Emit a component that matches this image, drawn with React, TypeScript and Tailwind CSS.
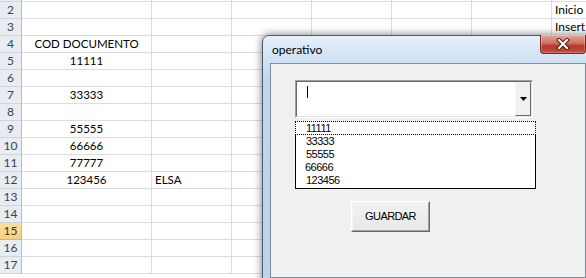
import React from "react";

// ─── Sheet data ──────────────────────────────────────────────────────────────

type Cells = { a?: string; b?: string; g?: string };

const ROWS: { n: number; cells: Cells }[] = [
  { n: 1, cells: {} },
  { n: 2, cells: { g: "Inicio" } },
  { n: 3, cells: { g: "Insert" } },
  { n: 4, cells: { a: "COD DOCUMENTO" } },
  { n: 5, cells: { a: "11111" } },
  { n: 6, cells: {} },
  { n: 7, cells: { a: "33333" } },
  { n: 8, cells: {} },
  { n: 9, cells: { a: "55555" } },
  { n: 10, cells: { a: "66666" } },
  { n: 11, cells: { a: "77777" } },
  { n: 12, cells: { a: "123456", b: "ELSA" } },
  { n: 13, cells: {} },
  { n: 14, cells: {} },
  { n: 15, cells: {} },
  { n: 16, cells: {} },
  { n: 17, cells: {} },
];

const ACTIVE_ROW = 15;

const LIST_ITEMS = ["11111", "33333", "55555", "66666", "123456"];

function SheetRow({ n, cells }: { n: number; cells: Cells }) {
  const active = n === ACTIVE_ROW;
  return (
    <div className="flex h-[17px] shrink-0">
      <div
        className={
          active
            ? "flex w-[22px] shrink-0 items-center justify-center border-r border-b border-r-[#b5bdc7] border-b-[#e9b35a] bg-[linear-gradient(180deg,#fbe0a3_0%,#f7cf7c_100%)] text-[12px] leading-[16px] text-[#3a3428]"
            : "flex w-[22px] shrink-0 items-center justify-center border-r border-b border-r-[#b5bdc7] border-b-[#cfd5dc] bg-[#e9ecf0] text-[12px] leading-[16px] text-[#34465c]"
        }
      >
        {/* row 1 is scrolled almost out of view, its number is not visible */}
        {n > 1 ? n : null}
      </div>
      <div className="w-[130px] shrink-0 border-r border-b border-[#dadcdf] text-center text-[11.5px] leading-[16px] text-black">
        {cells.a}
      </div>
      <div className="w-[80px] shrink-0 border-r border-b border-[#dadcdf] pl-[3px] text-[11.5px] leading-[16px] text-black">
        {cells.b}
      </div>
      <div className="w-[80px] shrink-0 border-r border-b border-[#dadcdf]" />
      <div className="w-[80px] shrink-0 border-r border-b border-[#dadcdf]" />
      <div className="w-[80px] shrink-0 border-r border-b border-[#dadcdf]" />
      <div className="w-[80px] shrink-0 border-r border-b border-[#dadcdf]" />
      <div className="w-[80px] shrink-0 whitespace-nowrap border-r border-b border-[#dadcdf] pl-[3px] text-[12px] leading-[16px] text-black">
        {cells.g}
      </div>
    </div>
  );
}

// ─── Window chrome ───────────────────────────────────────────────────────────

function CloseButton() {
  return (
    <div className="-mt-[1px] flex h-[19px] w-[46px] items-center justify-center rounded-b-[4px] border border-t-0 border-[#6e2a22] bg-[linear-gradient(180deg,#e4a899_0%,#d0705f_45%,#b8392a_60%,#c44c3a_100%)] shadow-[inset_0_0_0_1px_rgba(255,255,255,0.25)]">
      <svg width="14" height="12" viewBox="0 0 14 12">
        <path d="M3 2 L11 10 M11 2 L3 10" stroke="#4a1a14" strokeWidth="4" strokeLinecap="square" />
        <path d="M3 2 L11 10 M11 2 L3 10" stroke="#ffffff" strokeWidth="2" strokeLinecap="square" />
      </svg>
    </div>
  );
}

function ComboBox() {
  return (
    <div className="ml-[24px] mt-[16px] h-[38px] w-[238px] border border-t-[#a0a0a0] border-l-[#a0a0a0] border-b-white border-r-white">
      <div className="flex h-full w-full border border-t-[#696969] border-l-[#696969] border-b-[#e3e3e3] border-r-[#e3e3e3] bg-white">
        <div className="flex-1">
          <div className="ml-[10px] mt-[4px] h-[12px] w-[1px] bg-black" />
        </div>
        {/* Dropdown arrow button */}
        <div className="flex h-full w-[16px] shrink-0 items-center justify-center border border-t-[#f5f5f5] border-l-[#f5f5f5] border-b-[#696969] border-r-[#696969] bg-[#f0f0f0]">
          <svg width="7" height="4" viewBox="0 0 7 4">
            <path d="M0 0 H7 L3.5 4 Z" fill="#000" />
          </svg>
        </div>
      </div>
    </div>
  );
}

function DropList() {
  return (
    <div className="ml-[24px] mt-[3px] h-[68px] w-[241px] border border-black bg-white font-['Liberation_Sans',Arial,sans-serif] text-[11px] leading-[13px] tracking-[-0.5px] text-black">
      {LIST_ITEMS.map((item, i) => (
        <div
          key={item}
          className={
            i === 0
              ? "-mx-[1px] -mt-[1px] h-[14px] border border-dotted border-black bg-white pl-[10px]"
              : i === 3
                ? "h-[13px] pl-[9px]"
                : "h-[13px] pl-[10px]"
          }
        >
          {item}
        </div>
      ))}
    </div>
  );
}

function Dialog() {
  return (
    <div className="absolute left-[262px] top-[35px] h-[260px] w-[340px] rounded-t-[7px] border border-[#4d5b6c] bg-[linear-gradient(180deg,#e6f0fa_0%,#d2e3f4_8%,#bfd5ec_18%,#bcd3eb_100%)] pl-[7px] shadow-[0_0_9px_rgba(0,0,0,0.55)]">
      {/* Title bar */}
      <div className="flex h-[27px] w-[316px] items-start justify-between">
        <span className="ml-[2px] mt-[6px] text-[12px] leading-[16px] text-black">operativo</span>
        <CloseButton />
      </div>

      {/* Client area */}
      <div className="h-[215px] w-[316px] border border-[#7f8b9b] bg-[#f0f0f0]">
        <ComboBox />
        <DropList />
        <div className="ml-[80px] mt-[12px] h-[31px] w-[79px] border border-t-white border-l-white border-b-[#696969] border-r-[#696969]">
          <div className="flex h-full w-full items-center justify-center border border-t-[#f4f4f4] border-l-[#f4f4f4] border-b-[#a0a0a0] border-r-[#a0a0a0] bg-[linear-gradient(180deg,#f2f2f2_0%,#e8e8e8_100%)] font-['Liberation_Sans',Arial,sans-serif] text-[11px] tracking-[-0.6px] text-black">
            GUARDAR
          </div>
        </div>
      </div>
    </div>
  );
}

export default function App() {
  return (
    <div className="relative h-[278px] w-[586px] overflow-hidden bg-white font-['Lato','Liberation_Sans',sans-serif]">
      {/* Worksheet */}
      <div className="-mt-[15px] flex flex-col">
        {ROWS.map((r) => (
          <SheetRow key={r.n} n={r.n} cells={r.cells} />
        ))}
      </div>

      {/* UserForm window */}
      <Dialog />
    </div>
  );
}
